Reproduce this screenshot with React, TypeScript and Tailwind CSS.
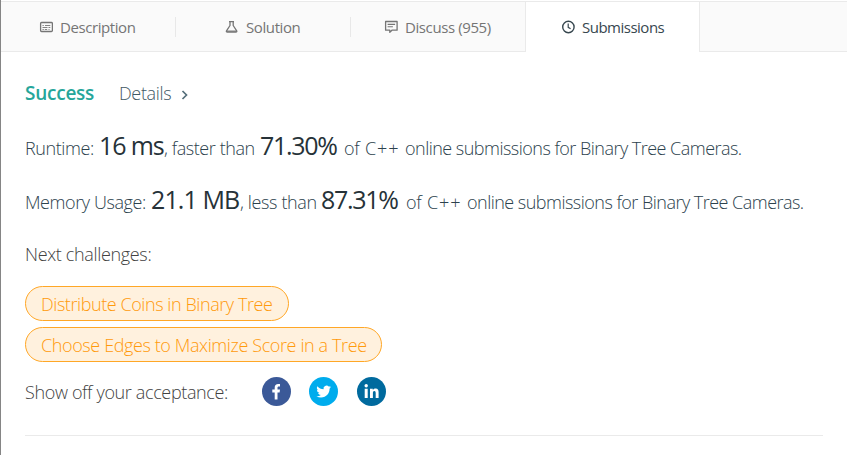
import type { ReactNode } from "react";

function DescriptionIcon() {
  return (
    <svg width="14" height="12" viewBox="0 0 14 12" fill="none" stroke="currentColor" className="shrink-0">
      <rect x="1.6" y="1.5" width="11.8" height="9" rx="1" strokeWidth="1.3" />
      <path d="M3.5 4.5h1.3M6 4.5h5.3M3.5 6.5h5M9.5 6.5h1.8M3.5 8.5h1.3M5.8 8.5h2.4M9.5 8.5h1" strokeWidth="0.9" />
    </svg>
  );
}

function FlaskIcon() {
  return (
    <svg width="14" height="14" viewBox="0 0 14 14" fill="none" stroke="currentColor" strokeWidth="1.3" strokeLinejoin="round" className="shrink-0">
      <path d="M4 1.7h5M5 1.7v3.8L1.5 10.8a.9.9 0 0 0 .8 1.4h8.6a.9.9 0 0 0 .8-1.4L8.2 5.5V1.7" />
      <path d="M1.8 11.2h9.6" />
    </svg>
  );
}

function DiscussIcon() {
  return (
    <svg width="14" height="14" viewBox="0 0 14 14" fill="none" stroke="currentColor" strokeWidth="1.3" className="shrink-0">
      <path d="M1.6 1.5h11.5v8.7H7.9L5.8 12.4v-2.2H1.6z" strokeLinejoin="round" />
      <path d="M3.6 4.4h7.5M3.6 6.8h5.3" strokeWidth="1.1" />
    </svg>
  );
}

function ClockIcon() {
  return (
    <svg width="14" height="14" viewBox="0 0 14 14" fill="none" stroke="currentColor" strokeWidth="1.4" className="shrink-0">
      <circle cx="7.4" cy="7" r="5.7" />
      <path d="M7.2 3.6v3.7l2.4 1.4" strokeWidth="1.2" />
    </svg>
  );
}

function Seg({ className, children }: { className: string; children: ReactNode }) {
  return (
    <span className={`shrink-0 ${className}`}>
      <span>{children}</span>
    </span>
  );
}

const big = "text-[25px] font-normal text-[#263238]";

export default function App() {
  return (
    <div className="flex h-[455px] w-[847px] overflow-hidden bg-white font-['Open_Sans','Noto_Sans',sans-serif] text-[18px] whitespace-nowrap text-[#2c424d]">
      <div className="flex w-px shrink-0 flex-col bg-[#858585]" />
      <div className="flex min-w-0 flex-1 flex-col">
        <nav className="mt-px flex h-[51px] shrink-0 border-t border-[#eaeaea] bg-[#fafafa] text-[15px] text-[#757575]">
          <div className="flex w-[175px] items-center border-b border-[#eaeaea]">
            <div className="flex h-5 w-full items-center border-r border-[#e8e8e8] pl-[38px]">
              <DescriptionIcon />
              <Seg className="mt-px ml-[7px] tracking-[-0.42px]">Description</Seg>
            </div>
          </div>
          <div className="flex w-[175px] items-center border-b border-[#eaeaea]">
            <div className="flex h-5 w-full items-center border-r border-[#e8e8e8] pl-[49px]">
              <FlaskIcon />
              <Seg className="mt-px ml-[7px] tracking-[-0.4px]">Solution</Seg>
            </div>
          </div>
          <div className="flex w-[175px] items-center border-r border-b border-[#eaeaea] pl-[33px]">
            <DiscussIcon />
            <Seg className="mt-px ml-[7px] tracking-[-0.4px]">Discuss (955)</Seg>
          </div>
          <div className="flex w-[173px] items-center bg-white pl-[35px] text-[#37474f]">
            <ClockIcon />
            <Seg className="ml-[7px] tracking-[-0.5px]">Submissions</Seg>
          </div>
          <div className="flex-1 border-b border-l border-[#eaeaea]" />
        </nav>
        <main className="flex flex-col pl-6 font-light">
          <div className="mt-[27px] flex h-7 items-center text-[#3f5965]">
            <Seg className="w-[94px] text-[19px] font-semibold tracking-[-0.25px] text-[#26a69a]">Success</Seg>
            <Seg className="mt-px tracking-[-0.35px]">Details</Seg>
            <svg width="8" height="10" viewBox="0 0 8 10" fill="none" stroke="#546e7a" strokeWidth="1.7" className="mt-[4px] ml-[10px]">
              <path d="M1.5 1l4 4-4 4" />
            </svg>
          </div>
          <p className="mt-[20px] flex h-[34px] items-baseline">
            <Seg className="w-[74px] tracking-[-0.4px]">Runtime:</Seg>
            <Seg className={`w-[65px] tracking-[-1.1px] ${big}`}>16 ms</Seg>
            <Seg className="w-[96px] tracking-[-0.42px]">, faster than</Seg>
            <Seg className={`w-[84px] tracking-[-1.3px] ${big}`}>71.30%</Seg>
            <Seg className="w-[21px] tracking-[-0.3px]">of</Seg>
            <Seg className="w-[40px] tracking-[0.9px]">C++</Seg>
            <Seg className="tracking-[-0.52px]">online submissions for Binary Tree Cameras.</Seg>
          </p>
          <p className="mt-[20px] flex h-[34px] items-baseline">
            <Seg className="w-[126px] tracking-[-0.42px]">Memory Usage:</Seg>
            <Seg className={`w-[89px] tracking-[-0.9px] ${big}`}>21.1 MB</Seg>
            <Seg className="w-[81px] tracking-[-0.36px]">, less than</Seg>
            <Seg className={`w-[85px] tracking-[-1.3px] ${big}`}>87.31%</Seg>
            <Seg className="w-[21px] tracking-[-0.3px]">of</Seg>
            <Seg className="w-[40px] tracking-[0.9px]">C++</Seg>
            <Seg className="tracking-[-0.52px]">online submissions for Binary Tree Cameras.</Seg>
          </p>
          <p className="mt-[25px] h-7 leading-7 tracking-[-0.34px] text-[#424242]">
            <span>Next challenges:</span>
          </p>
          <div className="mt-[18px] flex flex-col items-start gap-[6px] text-[#ff9a0c]">
            <a className="flex h-[35px] w-[264px] items-center rounded-full border border-[#ffa726] bg-[#fff1de] pt-px pl-[15px] tracking-[-0.43px]">
              <span>Distribute Coins in Binary Tree</span>
            </a>
            <a className="flex h-[35px] w-[357px] items-center rounded-full border border-[#ffa726] bg-[#fff1de] pt-px pl-[15px] tracking-[-0.39px]">
              <span>Choose Edges to Maximize Score in a Tree</span>
            </a>
          </div>
          <div className="mt-[14px] flex h-[30px] items-center text-[#424242]">
            <Seg className="mt-[2px] w-[237px] tracking-[-0.36px]">Show off your acceptance:</Seg>
            <div className="flex gap-[18px]">
              <svg width="29" height="29" viewBox="0 0 29 29">
                <circle cx="14.5" cy="14.5" r="14.5" fill="#3b5998" />
                <path fill="#fff" d="M12.7 22.5v-7H10.3v-3h2.4v-2c0-2.3 1.3-3.6 3.5-3.6.9 0 1.8.2 1.8.2v2.3h-1.1c-1.1 0-1.4.6-1.4 1.3v1.8h2.5l-.4 3h-2.1v7z" />
              </svg>
              <svg width="29" height="29" viewBox="0 0 29 29">
                <circle cx="14.5" cy="14.5" r="14.5" fill="#00aced" />
                <path fill="#fff" transform="translate(7.4 7.3) scale(.61)" d="M23.95 4.57a10 10 0 0 1-2.82.77 4.96 4.96 0 0 0 2.16-2.72c-.95.55-2 .96-3.13 1.18a4.92 4.92 0 0 0-8.38 4.48C7.69 8.1 4.07 6.13 1.64 3.16a4.92 4.92 0 0 0 1.52 6.57 4.9 4.9 0 0 1-2.23-.61v.06a4.92 4.92 0 0 0 3.95 4.83 5 5 0 0 1-2.21.08 4.94 4.94 0 0 0 4.6 3.42A9.87 9.87 0 0 1 0 19.54a14 14 0 0 0 7.55 2.21c9.05 0 14-7.5 14-13.98v-.64a9.9 9.9 0 0 0 2.4-2.56z" />
              </svg>
              <svg width="30" height="29" viewBox="0 0 30 29">
                <circle cx="15.5" cy="14.5" r="14.5" fill="#006a9e" />
                <path fill="#fff" d="M8.7 11.8h3v9.2h-3zM14 11.8h2.8v1.3c.5-.9 1.5-1.5 2.8-1.5 2.5 0 3 1.7 3 3.9V21h-2.9v-4.9c0-1.1-.1-2.2-1.4-2.2s-1.4 1.1-1.4 2.2V21H14z" />
                <circle cx="10.2" cy="8.8" r="1.7" fill="#fff" />
              </svg>
            </div>
          </div>
          <div className="mt-[29px] w-[798px] border-t border-[#eaeaea]" />
        </main>
      </div>
    </div>
  );
}
